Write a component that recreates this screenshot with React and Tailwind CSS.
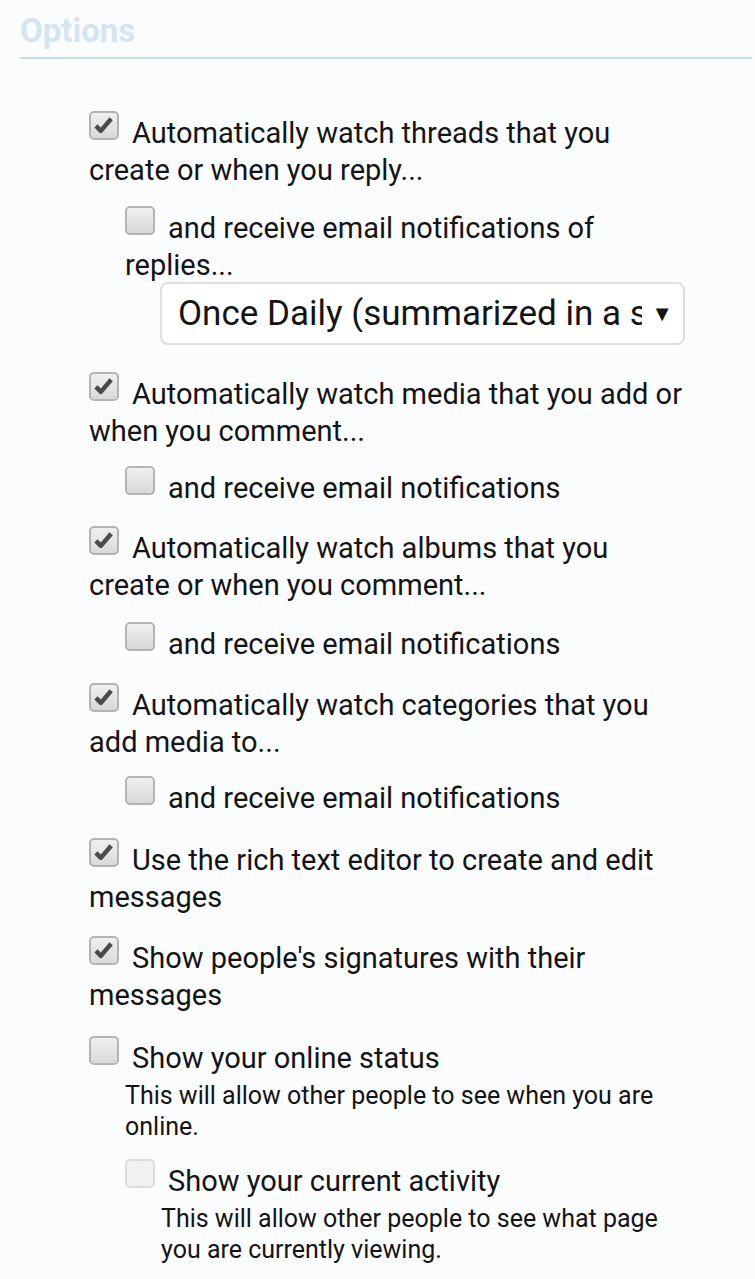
function Box({ checked, disabled }) {
  return (
    <span
      className={
        "relative -top-[3px] mr-[13px] inline-block h-[29px] w-[30px] rounded-[5px] border-2 align-baseline " +
        (disabled
          ? "border-[#dcdcdc] bg-[#f1f1f1]"
          : "border-[#b4b4b4] bg-gradient-to-b from-[#f0f0f0] to-[#d9d9d9]")
      }
    >
      {checked && (
        <svg viewBox="0 0 28 28" className="h-full w-full">
          <path
            d="M5 14.5 L10.5 20 L22 6.5"
            fill="none"
            stroke="#4a4a4a"
            strokeWidth="5"
            strokeLinejoin="round"
          />
        </svg>
      )}
    </span>
  );
}

function Option({ checked, disabled, label, hint, className = "", children }) {
  return (
    <li className={className}>
      <label>
        <Box checked={checked} disabled={disabled} />
        {label}
      </label>
      {hint && (
        <p className="mt-[3px] pl-[36px] text-[25px] leading-[31px]">{hint}</p>
      )}
      {children}
    </li>
  );
}

export default function App() {
  return (
    <div
      className="min-h-[1279px] bg-[#fbfcfe] pl-[20px] pr-[3px] text-[#141414]"
      style={{ fontFamily: "Roboto, 'Noto Sans', sans-serif" }}
    >
      <h2 className="border-b-2 border-[#c8dce6] pt-[12px] pb-[7px] text-[33px] font-bold leading-[38px] text-[#d4e5f0]">
        Options
      </h2>
      <ul className="ml-[69px] mr-[62px] pt-[55px] text-[29px] leading-[37px]">
        <Option checked label="Automatically watch threads that you create or when you reply...">
          <ul className="mt-[20px] pl-[36px]">
            <Option label="and receive email notifications of replies...">
              <div className="-mt-[2px] ml-[35px] flex h-[63px] w-[525px] items-center justify-between rounded-[8px] border-2 border-[#dedede] bg-white pl-[16px] pr-[10px]">
                <span className="w-[464px] overflow-hidden whitespace-nowrap text-[35px]">
                  Once Daily (summarized in a single email)
                </span>
                <span className="text-[22px]">▼</span>
              </div>
            </Option>
          </ul>
        </Option>
        <Option checked className="mt-[30px]" label="Automatically watch media that you add or when you comment...">
          <ul className="mt-[19px] pl-[36px]">
            <Option label="and receive email notifications" />
          </ul>
        </Option>
        <Option checked className="mt-[22px]" label="Automatically watch albums that you create or when you comment...">
          <ul className="mt-[21px] pl-[36px]">
            <Option label="and receive email notifications" />
          </ul>
        </Option>
        <Option checked className="mt-[23px]" label="Automatically watch categories that you add media to...">
          <ul className="mt-[18px] pl-[36px]">
            <Option label="and receive email notifications" />
          </ul>
        </Option>
        <Option checked className="mt-[24px]" label="Use the rich text editor to create and edit messages" />
        <Option checked className="mt-[23px]" label="Show people's signatures with their messages" />
        <Option
          className="mt-[25px]"
          label="Show your online status"
          hint="This will allow other people to see when you are online."
        >
          <ul className="mt-[20px] pl-[36px]">
            <Option
              disabled
              label="Show your current activity"
              hint="This will allow other people to see what page you are currently viewing."
            />
          </ul>
        </Option>
      </ul>
    </div>
  );
}
